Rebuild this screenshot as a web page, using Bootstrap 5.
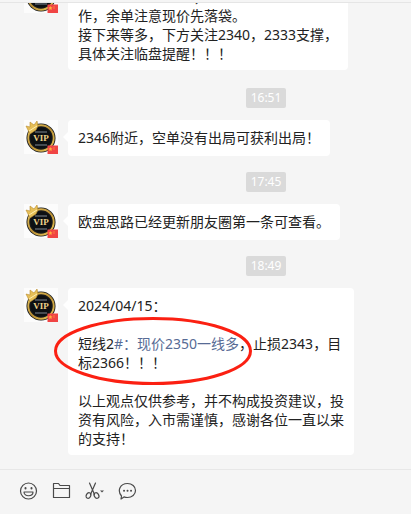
<!DOCTYPE html>
<html lang="zh-CN">
<head>
<meta charset="utf-8">
<meta name="viewport" content="width=device-width, initial-scale=1">
<title>聊天</title>
<link href="https://cdn.jsdelivr.net/npm/bootstrap@5.3.0/dist/css/bootstrap.min.css" rel="stylesheet">
<style>
body{background:#f5f5f5;color:#222;font:14px/19px "Noto Sans","Noto Sans CJK SC",sans-serif}
.topline{height:3px;border-bottom:1px solid #e5e5e5}
.stream{padding:0 24px 14px;min-height:0}
.msg{gap:10px}
.msg-long{margin-bottom:2px}
.avatar{width:34px;height:34px}
.bubble{max-width:286px;min-height:36px;padding:8px 10px 7px;border-radius:4px}
.bubble::before{content:"";position:absolute;left:-5px;top:12px;border:5px solid transparent;border-left:0;border-right-color:#fff}
.bubble p{margin:0 0 19px}
.bubble p:last-of-type{margin-bottom:0}
.bubble a{color:#576b95}
.stamp{padding:16px 0 12px 222px}
.stamp time{display:block;width:40px;height:20px;line-height:20px;font-size:12px;background:#dadada;border-radius:2px}
.ring{left:-15px;top:28px;width:200px;height:70px;pointer-events:none}
.tools{height:45px;padding:0 19px;gap:13px;border-top:1px solid #e7e7e7}
.tools button{width:20px;height:20px}
.tools svg{fill:none;stroke:#4a4a4a;stroke-width:1.2;stroke-linecap:round;stroke-linejoin:round}
</style>
<script src="https://cdn.jsdelivr.net/npm/bootstrap@5.3.0/dist/js/bootstrap.bundle.min.js"></script>
</head>
<body>
<svg class="position-absolute" width="0" height="0" aria-hidden="true">
<defs>
<linearGradient id="gold" x1="0" y1="0" x2="1" y2="1"><stop offset="0" stop-color="#f0cc62"/><stop offset=".5" stop-color="#b88e34"/><stop offset="1" stop-color="#efcb58"/></linearGradient>
</defs>
<symbol id="vip" viewBox="0 0 34 34">
<path fill="#fcfcfc" d="M0 0h34v34H0z"/>
<circle cx="17" cy="18" r="14.500" fill="#17191b"/>
<circle cx="17" cy="18" r="12.700" fill="none" stroke="url(#gold)" stroke-width="1.900"/>
<circle cx="17" cy="18" r="10.500" fill="#0d1013"/>
<path d="M11 12h12M11 25h12" fill="none" stroke="#454b52" stroke-width="2"/>
<path d="M2 6l4 1 0-5 4 3 3-4 1 5-2 4-6 4z" fill="#e6bf58" stroke="#b98c2b" stroke-width=".6"/>
<path d="M5 11l8-5" stroke="#fff0b0"/>
<text x="17" y="21" text-anchor="middle" font-family="Liberation Serif,serif" font-size="9" font-weight="bold" fill="#ecd28a">VIP</text>
<path fill="#f04444" d="M23.500 25.500H34V34H23.500z"/>
<path fill="#ffb13b" d="M26.500 27l.6 1.300 1.400.2-1 1 .2 1.400-1.200-.7-1.300.7.3-1.400-1-1 1.400-.2z"/><path d="M30 27v3" stroke="#ff8c3a" stroke-width=".8"/>
</symbol>
</svg>
<div class="vh-100 d-flex flex-column overflow-hidden">
<header class="topline flex-shrink-0"></header>
<main class="stream flex-grow-1 d-flex flex-column justify-content-end overflow-hidden">
<article class="msg msg-long d-flex align-items-start flex-shrink-0">
<svg class="avatar flex-shrink-0" role="img" aria-label="VIP"><use href="#vip"/></svg>
<div class="bubble bg-white position-relative">　　　　　　　　&nbsp;，<br>作，余单注意现价先落袋。<br>接下来等多，下方关注2340，2333支撑，<br>具体关注临盘提醒！！！</div>
</article>
<div class="stamp flex-shrink-0"><time class="text-white text-center">16:51</time></div>
<article class="msg d-flex align-items-start flex-shrink-0">
<svg class="avatar flex-shrink-0" role="img" aria-label="VIP"><use href="#vip"/></svg>
<div class="bubble bg-white position-relative">2346附近，空单没有出局可获利出局！</div>
</article>
<div class="stamp flex-shrink-0"><time class="text-white text-center">17:45</time></div>
<article class="msg d-flex align-items-start flex-shrink-0">
<svg class="avatar flex-shrink-0" role="img" aria-label="VIP"><use href="#vip"/></svg>
<div class="bubble bg-white position-relative">欧盘思路已经更新朋友圈第一条可查看。</div>
</article>
<div class="stamp flex-shrink-0"><time class="text-white text-center">18:49</time></div>
<article class="msg d-flex align-items-start flex-shrink-0">
<svg class="avatar flex-shrink-0" role="img" aria-label="VIP"><use href="#vip"/></svg>
<div class="bubble bg-white position-relative">
<p>2024/04/15：</p>
<p>短线2<a href="#" class="text-decoration-none">#：现价2350一线多</a>，止损2343，目标2366！！！</p>
<p>以上观点仅供参考，并不构成投资建议，投资有风险，入市需谨慎，感谢各位一直以来的支持！</p>
<svg class="ring position-absolute" viewBox="0 0 200 70" aria-hidden="true"><ellipse cx="100" cy="35" rx="97.500" ry="32.500" fill="none" stroke="#fb2012" stroke-width="3"/></svg>
</div>
</article>
</main>
<footer class="tools d-flex align-items-center flex-shrink-0">
<button type="button" class="btn border-0 p-0 d-flex" aria-label="表情"><svg width="20" height="20" viewBox="0 0 20 20"><circle cx="9.500" cy="9" r="8"/><path d="M5 10h9c0 5-9 5-9 0z"/><path d="M6.500 6v.6M12.500 6v.6" stroke-width="2"/></svg></button>
<button type="button" class="btn border-0 p-0 d-flex" aria-label="文件"><svg width="20" height="20" viewBox="0 0 20 20"><path d="M1.500 15.500v-14h5l1.500 2h9.500v12zM1.500 6.500h16"/></svg></button>
<button type="button" class="btn border-0 p-0 d-flex" aria-label="截图"><svg width="20" height="20" viewBox="0 0 20 20"><path d="M4.500 1l5 11.500M10.500 1l-5 11.500"/><ellipse cx="3.500" cy="13.500" rx="2.200" ry="3" transform="rotate(30 3.500 13.500)"/><ellipse cx="11.500" cy="13.500" rx="2.200" ry="3" transform="rotate(-30 11.500 13.500)"/><path d="M15 8.500h4l-2 2z" fill="#4a4a4a" stroke="none"/></svg></button>
<button type="button" class="btn border-0 p-0 d-flex" aria-label="聊天记录"><svg width="20" height="20" viewBox="0 0 20 20"><path d="M3.500 14C-1 8.500 2 1.500 9.500 1.500c4.500 0 8 3 8 7s-3.500 7-8 7c-1.500 0-2.500-.2-3.500-.6L3 17z"/><path d="M6 8.800h.1M9.500 8.800h.1M13 8.800h.1" stroke-width="1.900"/></svg></button>
</footer>
</div>
</body>
</html>
